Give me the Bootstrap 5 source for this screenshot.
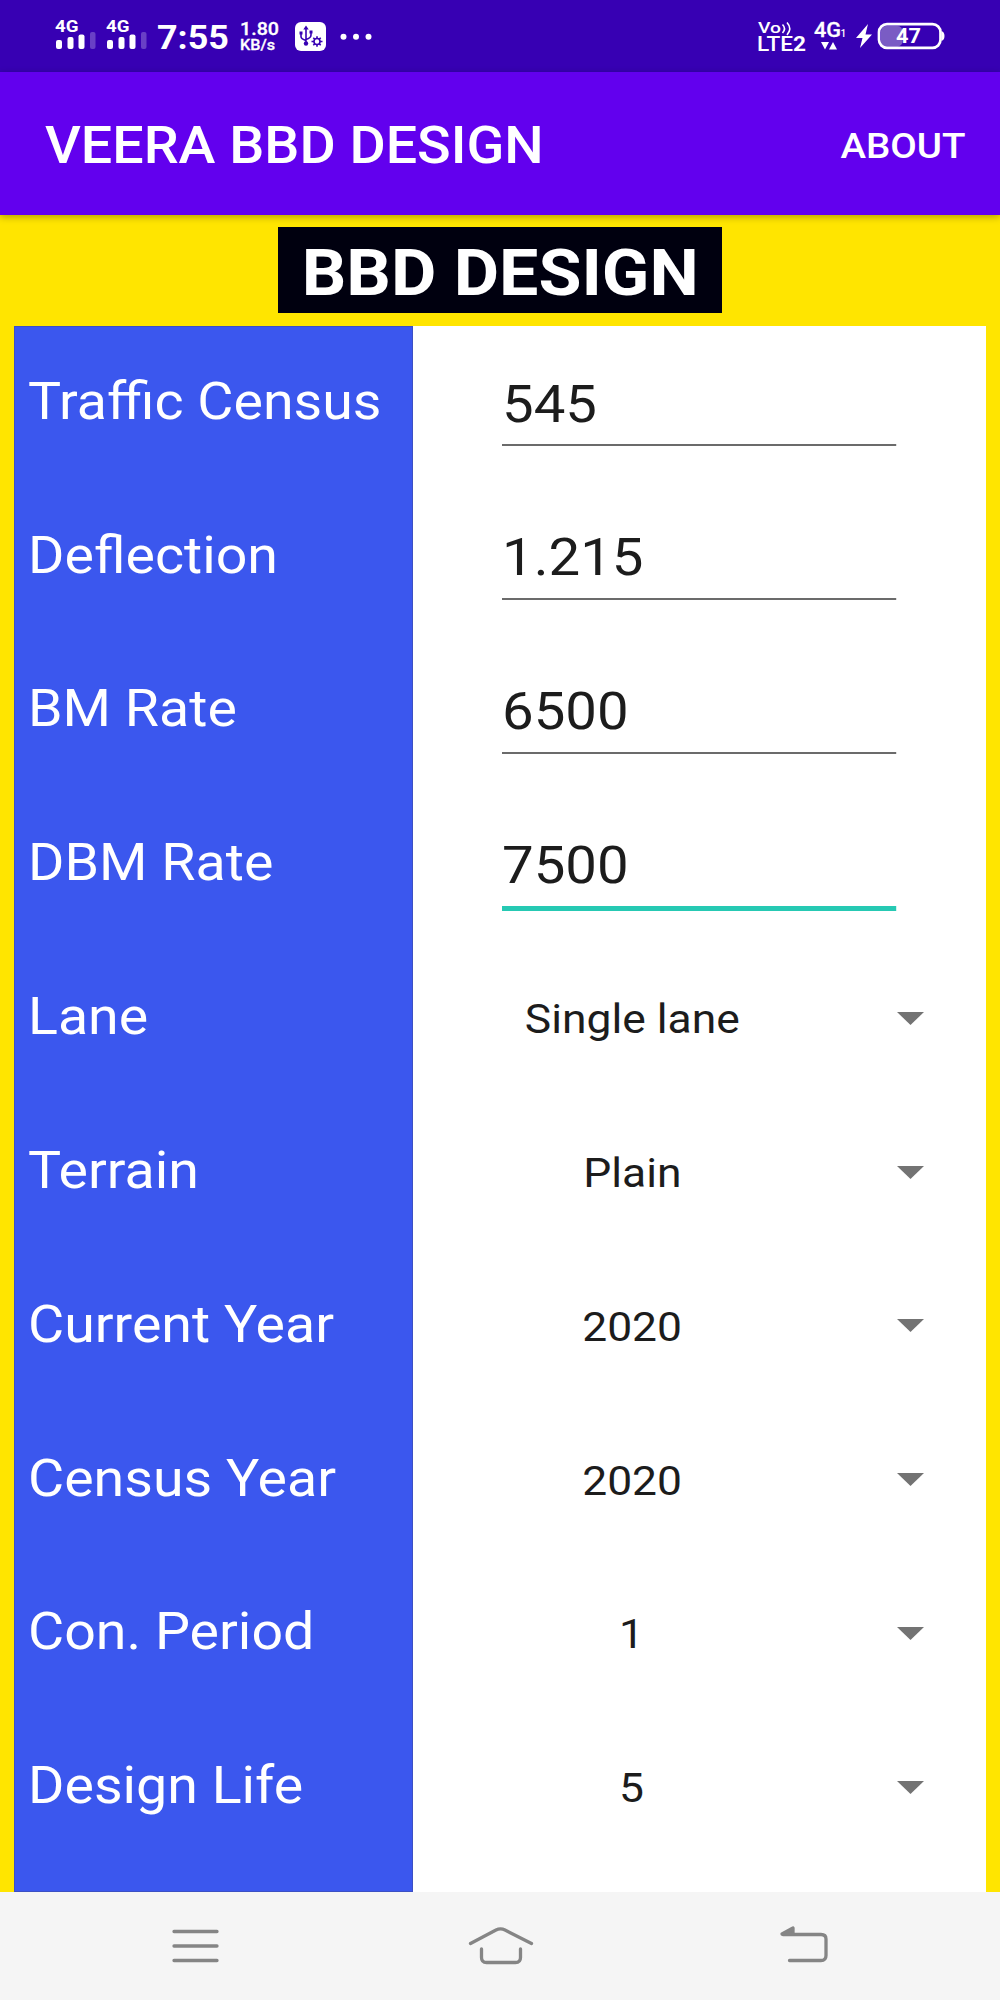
<!DOCTYPE html>
<html lang="en">
<head>
<meta charset="utf-8">
<meta name="viewport" content="width=device-width, initial-scale=1">
<title>VEERA BBD DESIGN</title>
<link rel="stylesheet" href="https://cdn.jsdelivr.net/npm/bootstrap@5.3.0/dist/css/bootstrap.min.css">
<style>
  body { font-family: Roboto, "Liberation Sans", sans-serif; background: #ffe500; overflow: hidden; }
  .app-screen { width: 1000px; height: 2000px; }
  /* wide letterforms used across the app */
  .wide { display: inline-block; transform: scaleX(1.083); transform-origin: left center; white-space: nowrap; }
  .wide-c { transform-origin: center; }
  .wide-r { transform-origin: right center; }
  .status { height: 72px; background: #3700b3; }
  .status svg { display: block; }
  .appbar { height: 143px; background: #6200ee; box-shadow: 0 2px 7px rgba(0,0,0,.3); z-index: 2; padding: 4px 34px 0 45px; }
  .app-name { font-size: 51.3px; font-weight: 500; line-height: 60px; }
  .about-link { font-size: 35.6px; font-weight: 500; line-height: 40px; }
  .banner { height: 111px; padding-top: 12px; }
  .banner-box { width: 444px; height: 86px; background: #00000f; font-size: 64.5px; font-weight: 700; line-height: 92px; }
  .panel { margin: 0 14px; overflow: hidden; }
  .labels { width: 399px; background: #3b57ee; box-shadow: inset 0 0 0 1px #3c50c4; }
  .line { height: 153.85px; }
  .labels .line { padding: 0 0 4px 14px; font-size: 52.3px; color: #fff; }
  .labels .wide { transform: scaleX(1.062); }
  .field { padding-left: 89px; padding-top: 43px; }
  .field .form-control { width: 364px; height: 77px; padding: 0 0 5px 0; border: 0; border-bottom: 2.4px solid #6b6b6b; border-radius: 0; font-size: 52px; line-height: 68px; color: #1c1c1c; background: transparent; box-shadow: none; }
  .field .form-control.active { height: 80px; border-bottom: 5px solid #26c9b3; }
  .picker { padding: 0 62px 0 74px; color: #1c1c1c; font-size: 41px; }
  .picker .choice { width: 290px; text-align: center; padding-top: 3px; }
  .navkeys { height: 108px; background: #f5f5f5; }
</style>
<script src="https://cdn.jsdelivr.net/npm/bootstrap@5.3.0/dist/js/bootstrap.bundle.min.js"></script>
</head>
<body>
<div class="app-screen d-flex flex-column">
  <header class="status flex-shrink-0">
    <svg width="1000" height="72" viewBox="0 0 1000 72" fill="#fff" font-family="Roboto, sans-serif">
      <g id="signal">
        <text x="55" y="31.500" font-size="16.500" font-weight="700" textLength="23.500" lengthAdjust="spacingAndGlyphs">4G</text>
        <rect x="56" y="40" width="6" height="9" rx="2"/>
        <rect x="67.5" y="37" width="6" height="12" rx="2"/>
        <rect x="78.5" y="34.5" width="6" height="14.5" rx="2"/>
        <rect x="90" y="32" width="5.5" height="17" rx="2" opacity=".25"/>
      </g>
      <use href="#signal" x="51"/>
      <text x="157" y="49" font-size="34" font-weight="700" textLength="72" lengthAdjust="spacingAndGlyphs">7:55</text>
      <text x="240" y="34.5" font-size="18" font-weight="500" textLength="39" lengthAdjust="spacingAndGlyphs" stroke="#fff" stroke-width=".3">1.80</text>
      <text x="240" y="50" font-size="15.5" font-weight="500" textLength="35" lengthAdjust="spacingAndGlyphs" stroke="#fff" stroke-width=".3">KB/s</text>
      <rect x="295" y="22" width="31" height="29" rx="6"/>
      <g fill="none" stroke="#3700b3" stroke-width="1.6">
        <path d="M306 28v15M301 33v3.500q0 2.500 5 4M311 32v3q0 3-5 4.500"/>
        <circle cx="317" cy="41.500" r="3"/>
        <path d="M317 36.200v2.300M317 44.500v2.300M311.500 41.500h2.500M320 41.500h2.500M313.300 37.800l1.600 1.600M319.100 43.600l1.600 1.600M320.700 37.800l-1.600 1.600M314.900 43.600l-1.600 1.600"/>
      </g>
      <path fill="#3700b3" d="M303.300 29.500L306 25.500l2.700 4zM299.500 31.500h3v3h-3zM309.500 30.500h3v3h-3z"/>
      <circle cx="306" cy="43.500" r="2.200" fill="#3700b3"/>
      <circle cx="343.500" cy="36.700" r="3"/><circle cx="356" cy="36.700" r="3"/><circle cx="368.500" cy="36.700" r="3"/>

      <text x="758" y="33" font-size="15.500" font-weight="500" textLength="23" lengthAdjust="spacingAndGlyphs">Vo</text>
      <g fill="none" stroke="#fff" stroke-width="1.6"><path d="M782.500 24.500q4 4 0 8.500M787 22.500q5.500 6 0 12.500"/></g>
      <text x="757" y="51" font-size="19.500" font-weight="500" textLength="49" lengthAdjust="spacingAndGlyphs">LTE<tspan font-weight="700">2</tspan></text>
      <text x="814" y="37" font-size="20.500" font-weight="500" textLength="27" lengthAdjust="spacingAndGlyphs" stroke="#fff" stroke-width=".3">4G</text>
      <text x="840.500" y="37" font-size="10" font-weight="500">1</text>
      <path d="M821 42h8l-4 7.500zM829 49.500h8L833 42z"/>
      <path d="M868 24l-12 14h6.500l-2.500 10 12-13.500h-6.500z"/>
      <rect x="881" y="26" width="21.500" height="20.500" rx="5" fill="#7a5cc4"/>
      <rect x="879" y="24.200" width="61.500" height="23.600" rx="8" fill="none" stroke="#fff" stroke-width="2.700"/>
      <path d="M941.500 31q3 1 3 5t-3 5z"/>
      <text x="896" y="43" font-size="20" font-weight="700" textLength="25" lengthAdjust="spacingAndGlyphs">47</text>
    </svg>
  </header>

  <nav class="appbar flex-shrink-0 position-relative d-flex justify-content-between align-items-center text-white">
    <span class="app-name wide">VEERA BBD DESIGN</span>
    <span class="about-link wide wide-r">ABOUT</span>
  </nav>

  <div class="banner flex-shrink-0 d-flex justify-content-center align-items-start">
    <div class="banner-box text-white text-center"><span class="wide wide-c">BBD DESIGN</span></div>
  </div>

  <main class="panel d-flex flex-grow-1 bg-white">
    <div class="labels flex-shrink-0">
      <div class="line d-flex align-items-center"><span class="wide">Traffic Census</span></div>
      <div class="line d-flex align-items-center"><span class="wide">Deflection</span></div>
      <div class="line d-flex align-items-center"><span class="wide">BM Rate</span></div>
      <div class="line d-flex align-items-center"><span class="wide">DBM Rate</span></div>
      <div class="line d-flex align-items-center"><span class="wide">Lane</span></div>
      <div class="line d-flex align-items-center"><span class="wide">Terrain</span></div>
      <div class="line d-flex align-items-center"><span class="wide">Current Year</span></div>
      <div class="line d-flex align-items-center"><span class="wide">Census Year</span></div>
      <div class="line d-flex align-items-center"><span class="wide">Con. Period</span></div>
      <div class="line d-flex align-items-center"><span class="wide">Design Life</span></div>
    </div>
    <div class="flex-grow-1">
      <div class="line field"><input class="form-control wide" value="545" aria-label="Traffic Census"></div>
      <div class="line field"><input class="form-control wide" value="1.215" aria-label="Deflection"></div>
      <div class="line field"><input class="form-control wide" value="6500" aria-label="BM Rate"></div>
      <div class="line field"><input class="form-control wide active" value="7500" aria-label="DBM Rate"></div>
      <div class="line picker d-flex align-items-center justify-content-between"><div class="choice"><span class="wide wide-c">Single lane</span></div><svg width="27" height="13"><path d="M0 0h27L13.500 13z" fill="#737373"/></svg></div>
      <div class="line picker d-flex align-items-center justify-content-between"><div class="choice"><span class="wide wide-c">Plain</span></div><svg width="27" height="13"><path d="M0 0h27L13.500 13z" fill="#737373"/></svg></div>
      <div class="line picker d-flex align-items-center justify-content-between"><div class="choice"><span class="wide wide-c">2020</span></div><svg width="27" height="13"><path d="M0 0h27L13.500 13z" fill="#737373"/></svg></div>
      <div class="line picker d-flex align-items-center justify-content-between"><div class="choice"><span class="wide wide-c">2020</span></div><svg width="27" height="13"><path d="M0 0h27L13.500 13z" fill="#737373"/></svg></div>
      <div class="line picker d-flex align-items-center justify-content-between"><div class="choice"><span class="wide wide-c">1</span></div><svg width="27" height="13"><path d="M0 0h27L13.500 13z" fill="#737373"/></svg></div>
      <div class="line picker d-flex align-items-center justify-content-between"><div class="choice"><span class="wide wide-c">5</span></div><svg width="27" height="13"><path d="M0 0h27L13.500 13z" fill="#737373"/></svg></div>
    </div>
  </main>

  <footer class="navkeys flex-shrink-0">
    <svg class="d-block" width="1000" height="108" viewBox="0 0 1000 108" fill="none" stroke="#858585" stroke-width="3.300" stroke-linecap="round" stroke-linejoin="round">
      <path d="M174 39.500h43M174 54h43M174 68.500h43"/>
      <path d="M470.500 51.500L496 38q4.500-2.200 9 0l26.500 13.500M481.500 57v8.500q0 5 5 5h29q5 0 5-5V57"/>
      <path d="M789.500 68.500H821q5 0 5-5V47q0-4.500-5-4.500H783"/>
      <path d="M782 42l11-6v6z" fill="#858585"/>
    </svg>
  </footer>
</div>
</body>
</html>
